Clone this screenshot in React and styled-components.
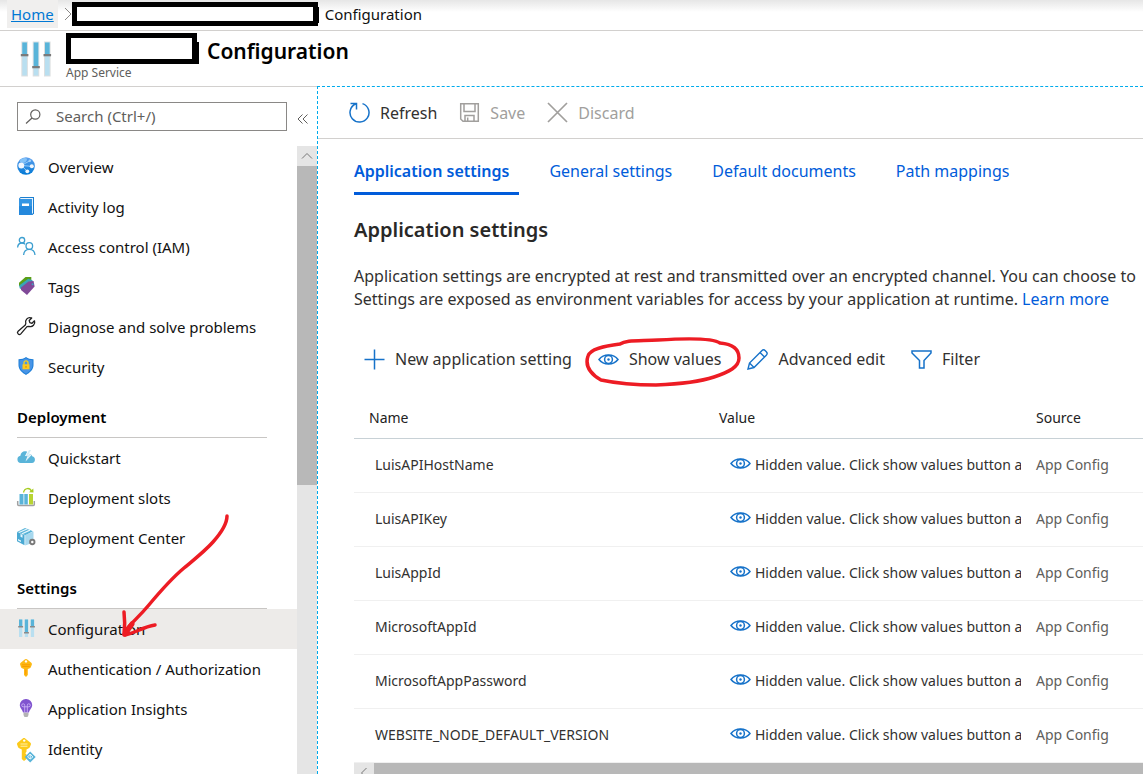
import React from "react";
import styled, { createGlobalStyle, css } from "styled-components";

const GlobalStyle = createGlobalStyle`
  *, *::before, *::after { box-sizing: border-box; }
  body {
    margin: 0;
    background: #fff;
    color: #111;
    font-family: "Noto Sans", "Open Sans", sans-serif;
    font-size: 15px;
    overflow: hidden;
  }
  button, input { font: inherit; color: inherit; }
`;

const Page = styled.div`
  display: flex;
  flex-direction: column;
  height: 100vh;
  overflow: hidden;
`;

const Breadcrumb = styled.nav`
  display: flex;
  align-items: center;
  flex: none;
  height: 31px;
  padding: 0 0 2px 7px;
  border-bottom: 1px solid #d2d0ce;
  background: linear-gradient(#e6e6e6, #fff 12px);
  font-size: 15px;
  white-space: nowrap;
`;

const HomeLink = styled.a`
  display: flex;
  align-items: center;
  height: 28px;
  padding: 0 4px;
  background: #f0efee;
  color: #0078d4;
  text-decoration: underline;
`;

const CrumbArrow = styled.svg`
  width: 8px;
  height: 14px;
  margin-left: 6px;
`;

const Redacted = styled.span`
  flex: none;
  background: #fff;
  border: 5px solid #000;
  ${(p) =>
    p.$large
      ? css`width: 131px; height: 31px;`
      : css`width: 246px; height: 24px;`}
`;

const Separator = styled.span`
  flex: none;
  width: ${(p) => (p.$large ? "2px" : "1px")};
  height: ${(p) => (p.$large ? "22px" : "16px")};
  margin: ${(p) => (p.$large ? "8px 8px 0 0" : "2px 6px 0 0")};
  background: #000;
`;

const Header = styled.header`
  display: flex;
  flex: none;
  gap: 14px;
  height: 55px;
  padding: 2px 0 0 20px;
`;

const HeaderIcon = styled.svg`
  width: 32px;
  height: 36px;
  margin-top: 8px;
`;

const TitleRow = styled.div`
  display: flex;
  align-items: center;
  height: 31px;
`;

const Title = styled.h1`
  margin: 0;
  padding-top: 4px;
  color: #000;
  font-size: 21px;
  line-height: 30px;
  font-weight: 600;
`;

const Subtitle = styled.div`
  color: #605e5c;
  font-size: 12px;
  line-height: 18px;
`;

const Body = styled.div`
  display: flex;
  flex: 1;
  min-height: 0;
`;

const Sidebar = styled.aside`
  display: flex;
  flex-direction: column;
  flex: none;
  width: 317px;
  border-top: 1px solid #d2d0ce;
`;

const SearchRow = styled.div`
  display: flex;
  align-items: center;
  flex: none;
  gap: 8px;
  height: 59px;
  padding-left: 17px;
`;

const SearchBox = styled.label`
  display: flex;
  align-items: center;
  width: 270px;
  height: 29px;
  padding-left: 7px;
  border: 1px solid #8a8886;
`;

const SearchInput = styled.input`
  flex: 1;
  min-width: 0;
  padding: 0 0 2px 14px;
  border: 0;
  outline: 0;
  background: none;
  font-size: 15px;
  &::placeholder { color: #605e5c; opacity: 1; }
`;

const CollapseButton = styled.button`
  width: 16px;
  height: 20px;
  padding: 2px 0 0;
  border: 0;
  background: none;
`;

const NavScroller = styled.div`
  display: flex;
  flex: 1;
  min-height: 0;
`;

const Menu = styled.nav`
  flex: 1;
  padding-top: 1px;
  overflow: hidden;
`;

const MenuHeading = styled.h2`
  height: 51px;
  margin: 0 30px 0 17px;
  padding-top: 20px;
  border-bottom: 1px solid #c8c6c4;
  color: #000;
  font-size: 15px;
  line-height: 20px;
  font-weight: 600;
`;

const MenuItem = styled.a`
  position: relative;
  display: flex;
  align-items: center;
  gap: 13px;
  height: 40px;
  padding-left: 17px;
  background: ${(p) => (p.$active ? "#edebe9" : "transparent")};
  color: #111;
  font-size: 15px;
  text-decoration: none;
  white-space: nowrap;
`;

const MenuIcon = styled.svg`
  flex: none;
  width: 18px;
  height: 18px;
  margin-bottom: 3px;
`;

const VScroll = styled.div`
  flex: none;
  width: 20px;
  background: #e5e5e5;
`;

const ScrollButton = styled.button`
  display: grid;
  place-items: center;
  width: 20px;
  height: 20px;
  padding: 0;
  border: 0;
  background: #e5e5e5;
`;

const VThumb = styled.div`
  height: 319px;
  background: #b8b8b8;
`;

const Main = styled.main`
  flex: 1;
  min-width: 0;
  border-top: 1px dashed #00abec;
  border-left: 1px dashed #00abec;
  overflow: hidden;
`;

const Toolbar = styled.div`
  display: flex;
  align-items: center;
  gap: 22px;
  height: 52px;
  padding-left: 31px;
  border-bottom: 1px solid #d2d0ce;
`;

const Command = styled.button`
  position: relative;
  display: flex;
  align-items: center;
  gap: 10px;
  padding: 0;
  border: 0;
  background: none;
  color: ${(p) => (p.disabled ? "#a19f9d" : "#323130")};
  font-size: 16px;
  line-height: 24px;
  white-space: nowrap;
`;

const CommandIcon = styled.svg`
  flex: none;
  width: 21px;
  height: 21px;
`;

const ValueIcon = styled(CommandIcon)`
  margin-bottom: 2px;
`;

const Content = styled.div`
  padding-left: 36px;
`;

const Tabs = styled.div`
  display: flex;
  gap: 30px;
  padding-top: 20px;
`;

const Tab = styled.button`
  height: 36px;
  padding: 0 10px 9px 0;
  border: 0;
  border-bottom: 3px solid ${(p) => (p.$active ? "#015cda" : "transparent")};
  background: none;
  color: #015cda;
  font-size: 16px;
  line-height: 24px;
  font-weight: ${(p) => (p.$active ? 600 : 400)};
  white-space: nowrap;
`;

const SectionTitle = styled.h2`
  margin: 21px 0 0;
  color: #292827;
  font-size: 20px;
  line-height: 28px;
  font-weight: 600;
`;

const Description = styled.p`
  margin: 21px 0 0;
  color: #323130;
  font-size: 16px;
  line-height: 23px;
  white-space: nowrap;
`;

const TextLink = styled.a`
  color: #015cda;
  text-decoration: none;
`;

const CommandBar = styled.div`
  display: flex;
  align-items: center;
  gap: 26px;
  height: 48px;
  margin-top: 24px;
  padding-left: 10px;
`;

const Table = styled.table`
  width: 100%;
  table-layout: fixed;
  border-collapse: separate;
  border-spacing: 0;
  font-size: 14px;
`;

const HeadCell = styled.th`
  width: ${(p) => p.$width || "auto"};
  height: 56px;
  padding: 14px 0 0 15px;
  border-bottom: 1px solid #c8d1d6;
  color: #222;
  font-weight: 400;
  text-align: left;
`;

const Cell = styled.td`
  height: 54px;
  padding: 0 0 2px ${(p) => p.$indent || "15px"};
  border-bottom: 1px solid #f0f0f0;
  color: ${(p) => (p.$muted ? "#605e5c" : "#323130")};
  white-space: nowrap;
  overflow: hidden;
`;

const HiddenValue = styled.button`
  display: flex;
  align-items: center;
  gap: 4px;
  padding: 0;
  border: 0;
  background: none;
  line-height: 20px;
  white-space: nowrap;
`;

const HScroll = styled.div`
  display: flex;
  height: 20px;
  background: #b8b8b8;
`;

const Annotation = styled.svg`
  position: absolute;
  z-index: 2;
  pointer-events: none;
  fill: none;
  stroke: #ed1c24;
  stroke-width: 3.5px;
  stroke-linecap: round;
  stroke-linejoin: round;
`;

const ArrowMark = styled(Annotation)`
  left: 110px;
  top: -100px;
  width: 130px;
  height: 140px;
`;

const CircleMark = styled(Annotation)`
  left: -16px;
  top: -12px;
  width: 164px;
  height: 56px;
`;

const icons = {
  overview: (
    <>
      <defs>
        <linearGradient id="globe" x1="0" y1="0" x2="0" y2="1">
          <stop stopColor="#5ea0ef" />
          <stop offset="1" stopColor="#0078d4" />
        </linearGradient>
      </defs>
      <circle cx="9" cy="9" r="8.8" fill="url(#globe)" />
      <path d="M4.300 8.500 12.800 3.800M4.300 8.500 10.300 14.300M4.300 8.500 14.800 9.300" stroke="#9cd0f8" fill="none" strokeWidth=".9" />
      <path d="M5 1.500c2-.9 4-.8 5 .2.3 2-1.500 4-3.700 4.400L3 5C2.500 3.500 3.500 2.200 5 1.500Z" fill="#83c2f7" />
      <circle cx="4.300" cy="8.500" r="2.900" fill="#f2f7fd" />
      <circle cx="14.800" cy="9.300" r="2" fill="#f2f7fd" />
      <circle cx="10.300" cy="14.300" r="1.900" fill="#f2f7fd" />
      <circle cx="12.800" cy="3.800" r="1.300" fill="#9fd0f8" />
    </>
  ),
  log: (
    <>
      <path d="M2 1.500 3.500 0H17v16.500L15.500 18H2Z" fill="#1b7fd0" />
      <path d="M3.500 1H16v15.500h-1V2.200H3z" fill="#e9f4fd" />
      <path d="M2 2.200h13V18H2z" fill="#2488dc" />
      <path d="M2 2.200h13v7H2z" fill="#3fa0ea" opacity=".6" />
      <path d="M5 6.500h7V9H5z" fill="#fff" />
    </>
  ),
  people: (
    <g fill="none" stroke="#3d9fd0" strokeWidth="1.300">
      <circle cx="5" cy="3.200" r="2.700" />
      <path d="M.6 10.500C.8 7.700 2.500 6 5 6c1.300 0 2.300.4 3 1.200" />
      <circle cx="12.300" cy="9" r="3.300" />
      <path d="M6.600 18c.3-3.500 2.500-5.600 5.700-5.600S17.700 14.500 18 18" />
    </g>
  ),
  tag: (
    <>
      <path d="M8.500 0h5.800v5L7 12.800 2 8.800V5.800Z" fill="#5a9e16" />
      <path d="m2.200 8.500 9-6.700 4.300 1.500v5l-8.500 6-4.300-3Z" fill="#37a5b8" />
      <path d="M11.500 4.500 16.600 4l1 5.500L10 18 4 13v-2.500Z" fill="#804998" />
      <circle cx="15.600" cy="7.300" r="1" fill="#3ea5c2" />
    </>
  ),
  wrench: (
    <path
      d="M13.800.8a4.300 4.300 0 0 0-5 5.600L8.300 8 1.100 14.200a1.900 1.900 0 0 0 2.700 2.700L10 9.700l2-.4a4.300 4.300 0 0 0 5.500-5.500l-2.500 2.500-2.200-.6-.6-2.200 2.500-2.500Z"
      fill="none" stroke="#1f1f1f" strokeWidth="1.300" strokeLinejoin="round"
    />
  ),
  shield: (
    <>
      <path d="M9 0c2 1.600 4.300 2.200 7.500 2.300v6c0 4.500-3.800 7.500-7.500 9.700-3.700-2.200-7.500-5.200-7.500-9.700v-6C4.700 2.200 7 1.600 9 0Z" fill="#1d7fd8" />
      <path d="M9 1.200c2 1.300 4 1.900 6.500 2v5c0 3.800-3.300 6.500-6.500 8.500-3.200-2-6.500-4.700-6.500-8.500v-5c2.500-.1 4.500-.7 6.500-2Z" fill="#4894e6" />
      <path d="M7 8V5.800a2 2 0 0 1 4 0V8" fill="none" stroke="#fcd116" strokeWidth="1.300" />
      <path d="M5.500 7.300h7v5h-7z" fill="#ffc81e" />
      <path d="M8.500 9h1v1.800h-1z" fill="#c98a00" />
    </>
  ),
  quickstart: (
    <>
      <path d="M3.700 15a3.700 3.700 0 0 1-.3-7.300C3.700 4.700 6 3 8.500 3.300c1.800 0 3.300 1 4.200 2.700 1.500.2 2.300 1 2.500 2.300a3.400 3.400 0 0 1-.2 6.700Z" fill="#59b4d9" />
      <path d="m11 2-3 6h2.500L8.500 13.500l6.500-7h-2.700L14.500 2Z" fill="#fff" />
      <path d="m12 2-3.700 6.700h2.500l-1.500 3.500 4.500-5.200h-2.500L14 2Z" fill="#8fd0ea" opacity=".4" />
    </>
  ),
  slots: (
    <>
      <path d="M.7 13v3.500c0 .7.4 1 1 1h14.600c.6 0 1-.3 1-1V13" fill="none" stroke="#a0a1a2" strokeWidth="1.500" />
      <path d="M2.500 6h4v10.500h-4zM7.300 6h3.500v10.500H7.300z" fill="#59b4d9" />
      <path d="M12 6h4v10.500h-4z" fill="#b8d432" />
      <path d="M6.500 4.500C7.500-.5 13-.5 14.300 3" fill="none" stroke="#a6cc1f" strokeWidth="1.300" />
      <path d="m12 4.300 4.500.3-.2-4Z" fill="#a6cc1f" />
    </>
  ),
  center: (
    <>
      <path d="m0 4 8-4 8 3.300-7.500 4Z" fill="#59b4d9" />
      <path d="m0 4 7.500 3v10.300L0 13.200Z" fill="#4aa9d3" />
      <path d="M8.200 7 16.500 3.500v11l-8.300 3Z" fill="#a7d8ee" />
      <path d="M2 4.500 10.500.8M5 5.700l8-3.600" stroke="#e8f6fc" strokeWidth="1.200" />
      <path d="m3.500 6 2 .8v3l-2-1ZM1 11l3 1.500V14l-3-1.500Z" fill="#e8f6fc" />
      <circle cx="15.300" cy="14" r="2.200" fill="#fff" stroke="#7a7a7a" strokeWidth="1.900" />
    </>
  ),
  sliders: (
    <>
      {[[2, 7.5], [7.8, 13.5], [13.8, 7.5]].map(([x, y]) => (
        <g key={x}>
          <path d={`M${x} .5h3.300v17.500h-3.300z`} fill="#b9dff0" />
          <path d={`M${x} .5h3.300V${y}h-3.300z`} fill="#59b4d9" />
          <path d={`M${x - 0.8} ${y - 0.5}h4.900v1.500h-4.900z`} fill="#8a8a8a" />
        </g>
      ))}
    </>
  ),
  key: (
    <>
      <path d="M9 0c.5 0 1 .2 1.300.5l4 3.200c.6.5.8 1.200.5 2l-1 2.500c-.2.500-.5.8-1 1L10.800 10v6L9 18l-2-2v-6l-2-.8c-.5-.2-.8-.5-1-1L3.200 5.700c-.3-.8-.1-1.500.5-2l4-3.200C8 .2 8.500 0 9 0Z" fill="#fdb913" />
      <path d="M5 5.300h8v.9H5zM5.300 7h7.400v.9H5.300z" fill="#f79d00" />
      <circle cx="9" cy="2.400" r="1.200" fill="#fff" />
      <path d="M8.300 10.500h1v5h-1z" fill="#ff9300" />
    </>
  ),
  bulb: (
    <>
      <path d="M9 0a6 6 0 0 1 6.200 6c0 3.200-2.700 4.500-3.200 7.500H6C5.500 10.500 2.800 9.200 2.800 6A6 6 0 0 1 9 0Z" fill="#8054cf" />
      <path d="M7.700 13V6.500a1.500 1.500 0 1 0-1.500 1.300h5.600a1.500 1.500 0 1 0-1.500-1.300V13" fill="none" stroke="#c9b0f5" strokeWidth=".9" />
      <path d="M6.500 13.800h5v2.300L10.500 18h-3l-1-1.900Z" fill="#b3b3b3" />
    </>
  ),
  identity: (
    <>
      <path d="M7-1c.5 0 .8.1 1.200.4l5 4c.7.5 1 1.200.7 2l-1 2.600c-.2.700-.6 1-1.200 1.300L9.500 10.500v2.300l-1.200 1.400 1.200 1.400V20L7 22 4.800 20v-9.500L2.200 9.300C1.600 9 1.200 8.700 1 8L.1 5.400c-.3-.8 0-1.500.7-2l5-4C6.200-.9 6.500-1 7-1Z" fill="#fcca1b" />
      <path d="M3.500 5h7M3.500 7.200h7" stroke="#fff0a8" strokeWidth="1.100" />
      <circle cx="7.200" cy="1.600" r="1.200" fill="#fff" />
      <path d="m13.200 12.500 5.500 5.500-5.500 5.500L7.700 18Z" fill="#59b4d9" />
      <path d="m10.500 18 2.700-3 2.700 3M13.200 15v5M10.500 18l2.700 2 2.700-2" fill="none" stroke="#e8f6fc" strokeWidth="1" />
    </>
  ),
};

const eyeShape = (
  <g fill="none" stroke="#1672c9" strokeWidth="1.500">
    <path d="M1 10.500C5.500 4.500 15.500 4.500 20 10.500 15.500 16.500 5.500 16.500 1 10.500Z" />
    <circle cx="10.500" cy="10.500" r="3.900" />
    <circle cx="10.500" cy="10.500" r="1.200" fill="#1672c9" stroke="none" />
  </g>
);

const menu = [
  { icon: "overview", label: "Overview" },
  { icon: "log", label: "Activity log" },
  { icon: "people", label: "Access control (IAM)" },
  { icon: "tag", label: "Tags" },
  { icon: "wrench", label: "Diagnose and solve problems" },
  { icon: "shield", label: "Security" },
  { heading: "Deployment" },
  { icon: "quickstart", label: "Quickstart" },
  { icon: "slots", label: "Deployment slots" },
  { icon: "center", label: "Deployment Center" },
  { heading: "Settings" },
  { icon: "sliders", label: "Configuration", active: true },
  { icon: "key", label: "Authentication / Authorization" },
  { icon: "bulb", label: "Application Insights" },
  { icon: "identity", label: "Identity" },
];

const settings = [
  "LuisAPIHostName",
  "LuisAPIKey",
  "LuisAppId",
  "MicrosoftAppId",
  "MicrosoftAppPassword",
  "WEBSITE_NODE_DEFAULT_VERSION",
];

function SideMenu() {
  return (
    <Sidebar>
      <SearchRow>
        <SearchBox>
          <svg width="17" height="17" viewBox="0 0 17 17" fill="none" stroke="#605e5c" strokeWidth="1.200" aria-hidden="true">
            <circle cx="10.300" cy="6.500" r="4.600" />
            <path d="M7 10 1 15.500" />
          </svg>
          <SearchInput type="text" aria-label="Search" placeholder="Search (Ctrl+/)" />
        </SearchBox>
        <CollapseButton aria-label="Collapse menu">
          <svg width="12" height="12" viewBox="0 0 12 12" fill="none" stroke="#605e5c" aria-hidden="true">
            <path d="M5.500 1.500 1 6l4.500 4.500M10.500 1.500 6 6l4.500 4.500" />
          </svg>
        </CollapseButton>
      </SearchRow>
      <NavScroller>
        <Menu aria-label="Resource menu">
          {menu.map((m) =>
            m.heading ? (
              <MenuHeading key={m.heading}>{m.heading}</MenuHeading>
            ) : (
              <MenuItem key={m.label} href="#" $active={m.active}>
                <MenuIcon viewBox="0 0 18 18" overflow="visible" aria-hidden="true">{icons[m.icon]}</MenuIcon>
                {m.label}
                {m.active && (
                  <ArrowMark viewBox="0 0 130 140" aria-hidden="true">
                    <path d="M117 7c0 8-6 17-14 26S86 49 74 59 48 85 38 97 22 113 15 122" />
                    <path d="M14 103c1 8 1 14 0 23 10-1 18-8 31-10" />
                    <path d="M15 125 22 115" strokeWidth="5" />
                  </ArrowMark>
                )}
              </MenuItem>
            )
          )}
        </Menu>
        <VScroll>
          <ScrollButton aria-label="Scroll up">
            <svg width="12" height="8" viewBox="0 0 12 8" fill="none" stroke="#777" aria-hidden="true">
              <path d="m1 6.500 5-5 5 5" />
            </svg>
          </ScrollButton>
          <VThumb />
        </VScroll>
      </NavScroller>
    </Sidebar>
  );
}

function SettingsTable() {
  return (
    <Table>
      <thead>
        <tr>
          <HeadCell $width="350px">Name</HeadCell>
          <HeadCell $width="317px">Value</HeadCell>
          <HeadCell>Source</HeadCell>
        </tr>
      </thead>
      <tbody>
        {settings.map((name) => (
          <tr key={name}>
            <Cell $indent="21px">{name}</Cell>
            <Cell $indent="26px">
              <HiddenValue>
                <ValueIcon viewBox="0 0 21 21" aria-hidden="true">{eyeShape}</ValueIcon>
                Hidden value. Click show values button a
              </HiddenValue>
            </Cell>
            <Cell $muted>App Config</Cell>
          </tr>
        ))}
      </tbody>
    </Table>
  );
}

export default function App() {
  return (
    <>
      <GlobalStyle />
      <Page>
        <Breadcrumb aria-label="Breadcrumb">
          <HomeLink href="#">Home</HomeLink>
          <CrumbArrow viewBox="0 0 8 14" fill="none" stroke="#8a8886" aria-hidden="true">
            <path d="m1 1 6 6-6 6" />
          </CrumbArrow>
          <Redacted />
          <Separator />
          <span>Configuration</span>
        </Breadcrumb>
        <Header>
          <HeaderIcon viewBox="0 0 32 36" aria-hidden="true">
            {[[1.3, 13], [12.7, 25], [24, 13]].map(([x, y]) => (
              <g key={x}>
                <path d={`M${x} .5h6.600v35h-6.600z`} fill="#dcdfe0" />
                <path d={`M${x + 1} 1.500h4.600v33h-4.600z`} fill="#b9dff0" />
                <path d={`M${x + 1} 1.500h4.600V${y}h-4.600z`} fill="#59b4d9" />
                <path d={`M${x - 0.5} ${y}h7.600v2.300h-7.600z`} fill="#7a7a7a" />
              </g>
            ))}
          </HeaderIcon>
          <div>
            <TitleRow>
              <Redacted $large />
              <Separator $large />
              <Title>Configuration</Title>
            </TitleRow>
            <Subtitle>App Service</Subtitle>
          </div>
        </Header>
        <Body>
          <SideMenu />
          <Main>
            <Toolbar>
              <Command>
                <CommandIcon viewBox="0 0 21 21" fill="none" stroke="#1672c9" strokeWidth="1.500" aria-hidden="true">
                  <path d="M13.500 1.600a9.500 9.500 0 1 1-7 .4M1.500 1.500h6v6" />
                </CommandIcon>
                Refresh
              </Command>
              <Command disabled>
                <CommandIcon viewBox="0 0 21 21" fill="none" stroke="#a19f9d" strokeWidth="1.500" aria-hidden="true">
                  <path d="M1.700 1.700h17.600v17.600H4L1.700 17ZM5 2v7.500h11V2M6 19v-5.500h9V19M8.700 15.500V19" />
                </CommandIcon>
                Save
              </Command>
              <Command disabled>
                <CommandIcon viewBox="0 0 21 21" fill="none" stroke="#a19f9d" strokeWidth="1.700" aria-hidden="true">
                  <path d="m1 1 19 19M20 1 1 20" />
                </CommandIcon>
                Discard
              </Command>
            </Toolbar>
            <Content>
              <Tabs role="tablist">
                <Tab role="tab" aria-selected="true" $active>Application settings</Tab>
                <Tab role="tab">General settings</Tab>
                <Tab role="tab">Default documents</Tab>
                <Tab role="tab">Path mappings</Tab>
              </Tabs>
              <SectionTitle>Application settings</SectionTitle>
              <Description>
                Application settings are encrypted at rest and transmitted over an encrypted channel. You can choose to
                <br />
                Settings are exposed as environment variables for access by your application at runtime.{" "}
                <TextLink href="#">Learn more</TextLink>
              </Description>
              <CommandBar>
                <Command>
                  <CommandIcon viewBox="0 0 21 21" stroke="#1672c9" strokeWidth="1.500" aria-hidden="true">
                    <path d="M10.500.5v20M.5 10.500h20" />
                  </CommandIcon>
                  New application setting
                </Command>
                <Command>
                  <CommandIcon viewBox="0 0 21 21" aria-hidden="true">{eyeShape}</CommandIcon>
                  Show values
                  <CircleMark viewBox="0 0 164 56" aria-hidden="true">
                    <path d="M76 5C54 6 44 5 38 9 22 11 8 14 6 21c-3 9 1 17 13 24 14 3 30 5 55 5 24-1 43-3 58-8 15-5 25-10 25-19 0-10-7-14-19-15-7-5-30-5-62-3Z" />
                  </CircleMark>
                </Command>
                <Command>
                  <CommandIcon viewBox="0 0 21 21" fill="none" stroke="#1672c9" strokeWidth="1.400" aria-hidden="true">
                    <path d="m1 20 1.500-6L14.800 1.700a2.500 2.500 0 0 1 3.500 0l1 1a2.500 2.500 0 0 1 0 3.500L7 18.500ZM13 3.500 17.500 8M2.500 14 7 18.500" />
                  </CommandIcon>
                  Advanced edit
                </Command>
                <Command>
                  <CommandIcon viewBox="0 0 21 21" fill="none" stroke="#1672c9" strokeWidth="1.500" aria-hidden="true">
                    <path d="M1 2h19v2l-7 7.500V19H8.500v-7.500L1 4Z" />
                  </CommandIcon>
                  Filter
                </Command>
              </CommandBar>
              <SettingsTable />
              <HScroll>
                <ScrollButton aria-label="Scroll left">
                  <svg width="8" height="12" viewBox="0 0 8 12" fill="none" stroke="#777" aria-hidden="true">
                    <path d="m6.500 1-5 5 5 5" />
                  </svg>
                </ScrollButton>
              </HScroll>
            </Content>
          </Main>
        </Body>
      </Page>
    </>
  );
}
